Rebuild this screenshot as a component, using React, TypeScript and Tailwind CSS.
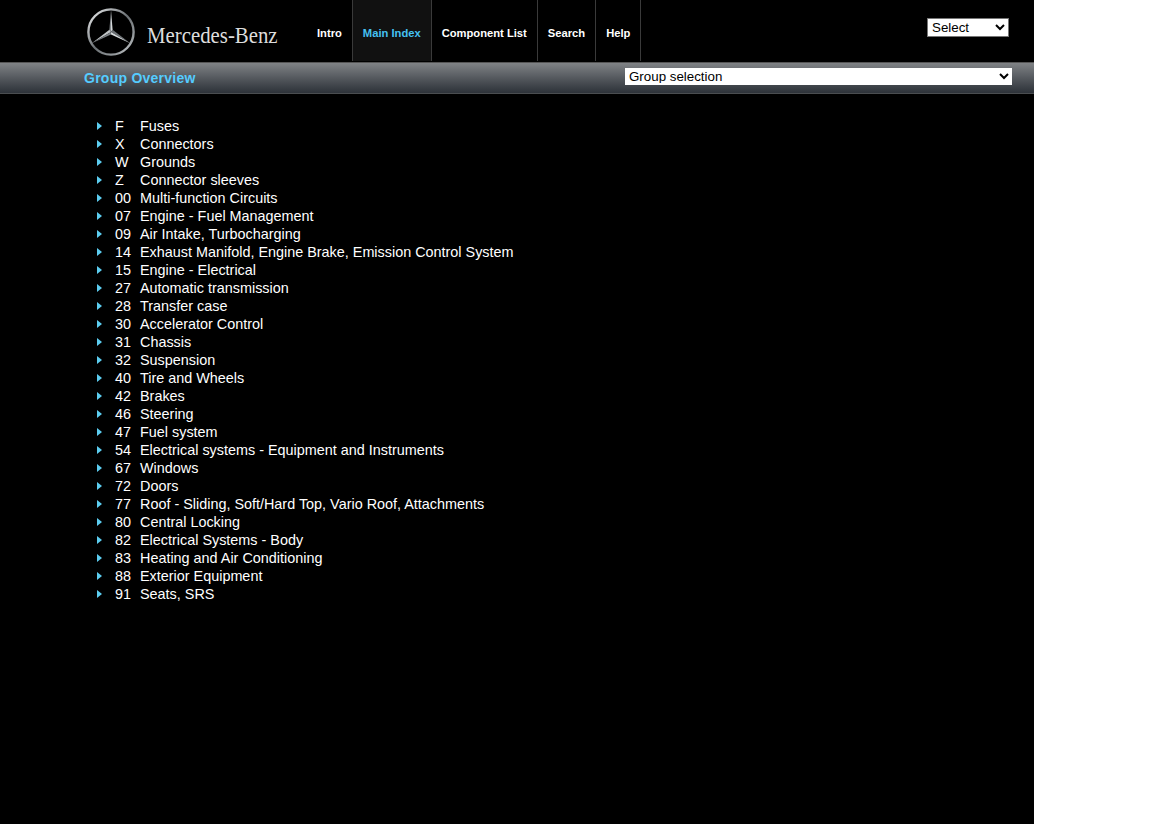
const navItems = ["Intro", "Main Index", "Component List", "Search", "Help"];

const groups = [
  ["F", "Fuses"],
  ["X", "Connectors"],
  ["W", "Grounds"],
  ["Z", "Connector sleeves"],
  ["00", "Multi-function Circuits"],
  ["07", "Engine - Fuel Management"],
  ["09", "Air Intake, Turbocharging"],
  ["14", "Exhaust Manifold, Engine Brake, Emission Control System"],
  ["15", "Engine - Electrical"],
  ["27", "Automatic transmission"],
  ["28", "Transfer case"],
  ["30", "Accelerator Control"],
  ["31", "Chassis"],
  ["32", "Suspension"],
  ["40", "Tire and Wheels"],
  ["42", "Brakes"],
  ["46", "Steering"],
  ["47", "Fuel system"],
  ["54", "Electrical systems - Equipment and Instruments"],
  ["67", "Windows"],
  ["72", "Doors"],
  ["77", "Roof - Sliding, Soft/Hard Top, Vario Roof, Attachments"],
  ["80", "Central Locking"],
  ["82", "Electrical Systems - Body"],
  ["83", "Heating and Air Conditioning"],
  ["88", "Exterior Equipment"],
  ["91", "Seats, SRS"],
];

function Star() {
  return (
    <svg width="48" height="48" viewBox="0 0 48 48" className="shrink-0">
      <defs>
        <linearGradient id="ring" x1="0" y1="0" x2="1" y2="1">
          <stop offset="0" stopColor="#f2f4f5" />
          <stop offset="0.5" stopColor="#6a6f73" />
          <stop offset="0.8" stopColor="#979c9f" />
          <stop offset="1" stopColor="#dde0e2" />
        </linearGradient>
      </defs>
      <circle cx="24" cy="24" r="22.6" fill="none" stroke="url(#ring)" strokeWidth="2.4" />
      {/* three arms, each with a lit and a shaded side */}
      <path d="M24 2 L25.6 21.8 L24 24 Z" fill="#d6dadc" />
      <path d="M24 2 L22.4 21.8 L24 24 Z" fill="#868b8f" />
      <path d="M43.2 35.2 L25.6 21.8 L24 24 Z" fill="#6e7377" />
      <path d="M43.2 35.2 L24 26.6 L24 24 Z" fill="#d6dadc" />
      <path d="M4.8 35.2 L22.4 21.8 L24 24 Z" fill="#c0c4c6" />
      <path d="M4.8 35.2 L24 26.6 L24 24 Z" fill="#7a7f83" />
    </svg>
  );
}

export default function App() {
  return (
    <div className="w-[1034px] min-h-[824px] bg-black font-['Liberation_Sans',Arial,sans-serif]">
      <header className="flex h-[62px] pl-[87px]">
        <div className="flex items-center w-[220px] pt-[2px]">
          <Star />
          <span className="ml-[12px] mt-[7px] origin-left scale-x-[0.905] font-['Liberation_Serif',serif] text-[23px] leading-none text-[#dddddd] whitespace-nowrap">
            Mercedes-Benz
          </span>
        </div>
        <nav className="flex h-[61px]">
          {navItems.map((item) => (
            <a
              key={item}
              className={`flex items-center px-[10px] pt-[6px] text-[11.2px] font-bold whitespace-nowrap border-r border-[#3a3a3a] ${
                item === "Main Index" ? "bg-[#111111] text-[#45c1f2]" : "text-white"
              }`}
            >
              {item}
            </a>
          ))}
        </nav>
        <div className="ml-auto pt-[18px] pr-[25px]">
          <select className="block w-[82px] h-[19px] bg-white text-black text-[13.33px] border border-[#767676] appearance-auto">
            <option>Select</option>
          </select>
        </div>
      </header>

      <div className="flex items-start justify-between h-[32px] pl-[84px] pr-[22px] bg-gradient-to-b from-[#808386] to-[#2d3239] border-t border-[#555555] border-b-[#4a4d50] border-b">
        <h1 className="mt-[6px] text-sm font-bold leading-[18px] tracking-[0.25px] text-[#55ccff]">
          Group Overview
        </h1>
        <select className="block mt-[5px] w-[387px] h-[17px] bg-white text-black text-[13.33px] border-0 border-b-2 border-white appearance-auto">
          <option>Group selection</option>
        </select>
      </div>

      <ul className="pt-[24px] pl-[97px]">
        {groups.map(([code, name]) => (
          <li key={code} className="flex items-center h-[18px] text-[14.4px] text-white whitespace-nowrap">
            <svg width="5" height="8" viewBox="0 0 5 8" className="shrink-0 mb-[2px]">
              <path d="M0 0 L5 4 L0 8 Z" fill="#5ccdf0" />
            </svg>
            <span className="ml-[13px] w-[25px]">{code}</span>
            <span>{name}</span>
          </li>
        ))}
      </ul>
    </div>
  );
}
